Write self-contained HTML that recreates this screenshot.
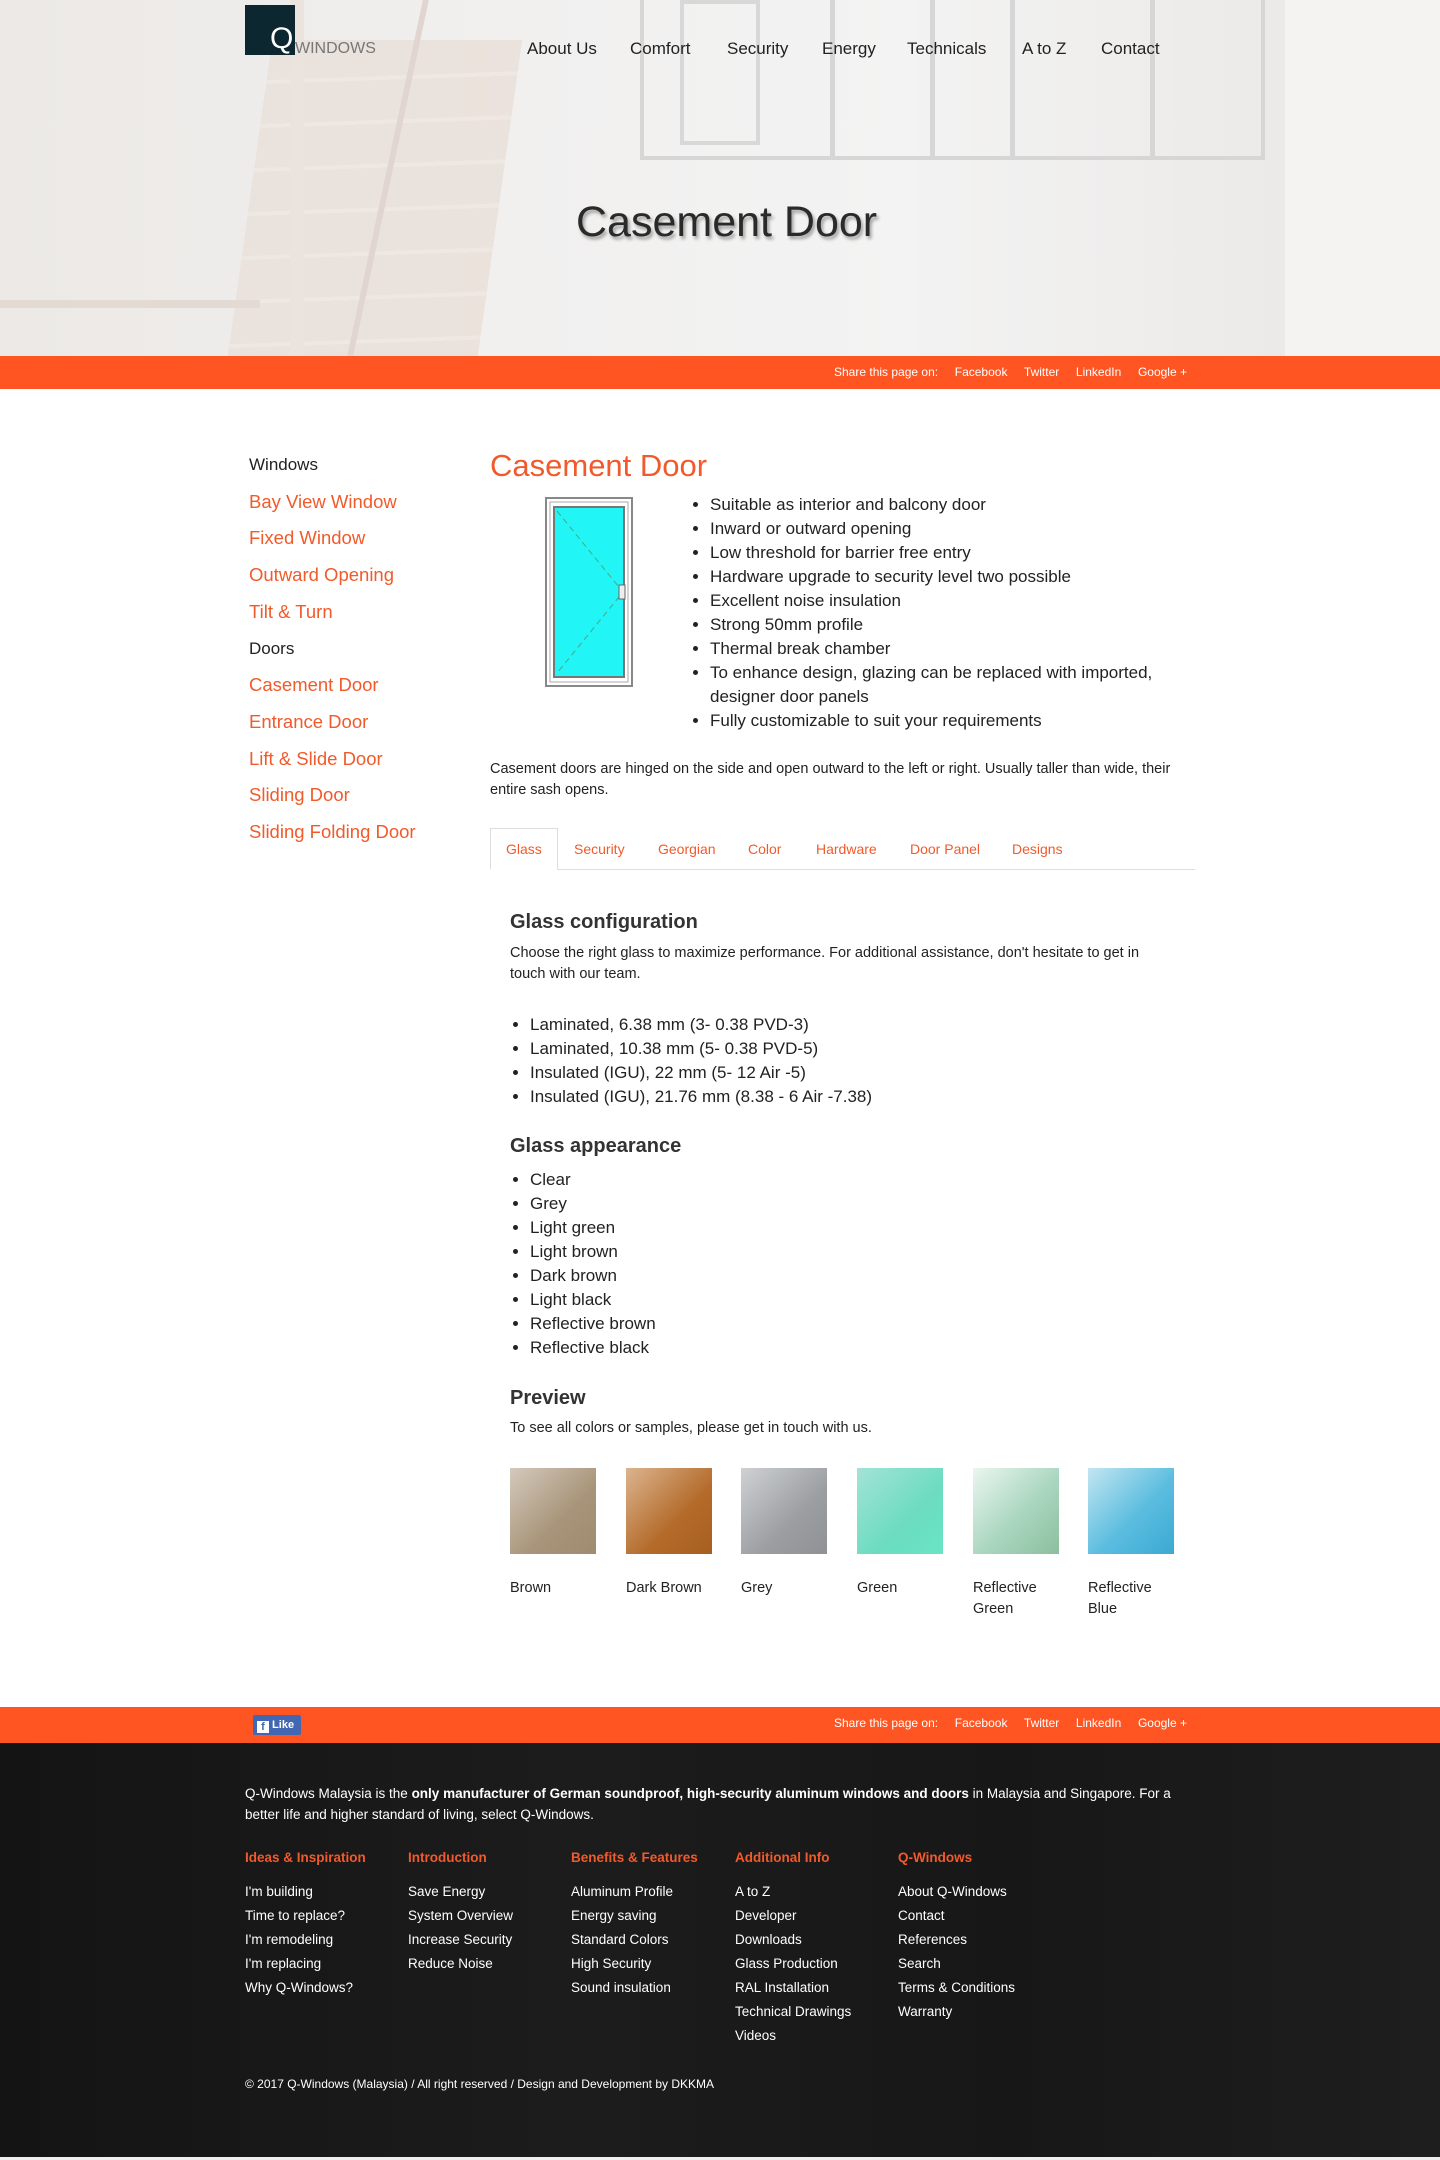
<!DOCTYPE html>
<html><head><meta charset="utf-8"><style>
*{margin:0;padding:0;box-sizing:border-box}
body{width:1440px;height:2160px;font-family:"Liberation Sans",sans-serif;color:#333;background:#fff;position:relative;overflow:hidden}
.abs{position:absolute;white-space:nowrap}
.hero{position:absolute;left:0;top:0;width:1440px;height:356px;background:#efeeed;overflow:hidden}
.or{color:#f15a2b}
ul{list-style:disc}
</style></head><body>
<div class="hero">
  <div style="position:absolute;left:0;top:0;width:1285px;height:356px;background:linear-gradient(90deg,#ece9e6,#f1f0ef 40%,#f3f3f3 70%,#eceae8)"></div>
  <div style="position:absolute;left:1285px;top:0;width:155px;height:356px;background:#f4f3f2"></div>
  <div style="position:absolute;left:250px;top:40px;width:250px;height:316px;background:repeating-linear-gradient(178deg,#e9dfd8 0 40px,#eee6e0 40px 44px);opacity:.8;transform:skewX(-8deg)"></div>
  <div style="position:absolute;left:290px;top:0;width:14px;height:356px;background:#ebe3dd"></div>
  <div style="position:absolute;left:385px;top:0;width:6px;height:356px;background:#e0d6cf;transform:skewX(-12deg)"></div>
  <div style="position:absolute;left:0;top:300px;width:260px;height:8px;background:#e3dad3"></div>
  <div style="position:absolute;left:640px;top:0;width:625px;height:160px;border:4px solid #d6d6d6;border-top:none"></div>
  <div style="position:absolute;left:680px;top:0;width:80px;height:145px;border:4px solid #d8d8d8"></div>
  <div style="position:absolute;left:830px;top:0;width:5px;height:160px;background:#d6d6d6"></div>
  <div style="position:absolute;left:930px;top:0;width:5px;height:160px;background:#d6d6d6"></div>
  <div style="position:absolute;left:1010px;top:0;width:5px;height:160px;background:#d6d6d6"></div>
  <div style="position:absolute;left:1150px;top:0;width:5px;height:160px;background:#d6d6d6"></div>
  <div style="position:absolute;left:245px;top:5px;width:50px;height:50px;background:#0d2730"></div>
  <div class="abs" style="left:270px;top:24px;font-size:30px;color:#fff;line-height:30px">Q</div>
  <div class="abs" style="left:295px;top:40px;font-size:16px;color:#777;line-height:18px">WINDOWS</div>
  <div class="abs" style="left:527px;top:39px;font-size:17px;color:#222">About Us</div>
  <div class="abs" style="left:630px;top:39px;font-size:17px;color:#222">Comfort</div>
  <div class="abs" style="left:727px;top:39px;font-size:17px;color:#222">Security</div>
  <div class="abs" style="left:822px;top:39px;font-size:17px;color:#222">Energy</div>
  <div class="abs" style="left:907px;top:39px;font-size:17px;color:#222">Technicals</div>
  <div class="abs" style="left:1022px;top:39px;font-size:17px;color:#222">A to Z</div>
  <div class="abs" style="left:1101px;top:39px;font-size:17px;color:#222">Contact</div>
  <div class="abs" style="left:576px;top:198px;font-size:43px;color:#2a2a2a;text-shadow:2px 3px 3px rgba(0,0,0,.35)">Casement Door</div>
</div>
<div style="position:absolute;left:0;top:356px;width:1440px;height:33px;background:#fe5523"></div>
<div class="abs" style="left:834px;top:365px;font-size:12px;color:#fff">Share this page on:&nbsp;&nbsp;&nbsp;&nbsp; Facebook &nbsp;&nbsp;&nbsp; Twitter &nbsp;&nbsp;&nbsp; LinkedIn &nbsp;&nbsp;&nbsp; Google +</div>

<div style="position:absolute;left:249px;top:447px;font-size:18.5px;line-height:36.7px">
<div style="color:#222;font-size:17px">Windows</div>
<div class="or">Bay View Window</div><div class="or">Fixed Window</div><div class="or">Outward Opening</div><div class="or">Tilt &amp; Turn</div>
<div style="color:#222;font-size:17px">Doors</div>
<div class="or">Casement Door</div><div class="or">Entrance Door</div><div class="or">Lift &amp; Slide Door</div><div class="or">Sliding Door</div><div class="or">Sliding Folding Door</div>
</div>

<div class="abs or" style="left:490px;top:448px;font-size:31px">Casement Door</div>
<svg style="position:absolute;left:545px;top:497px" width="88" height="190" viewBox="0 0 88 190">
<rect x="1" y="1" width="86" height="188" fill="#fff" stroke="#888" stroke-width="2"/>
<rect x="5" y="5" width="78" height="180" fill="#fff" stroke="#aaa"/>
<rect x="9" y="10" width="70" height="170" fill="#22f5f5" stroke="#777" stroke-width="2"/>
<path d="M12 14 L78 95 L12 176" fill="none" stroke="#4a8" stroke-width="1" stroke-dasharray="6 4"/>
<rect x="74" y="88" width="6" height="14" fill="#eee" stroke="#666"/>
</svg>
<ul style="position:absolute;left:710px;top:493px;width:480px;font-size:17px;line-height:24px;color:#222">
<li>Suitable as interior and balcony door</li><li>Inward or outward opening</li><li>Low threshold for barrier free entry</li><li>Hardware upgrade to security level two possible</li><li>Excellent noise insulation</li><li>Strong 50mm profile</li><li>Thermal break chamber</li><li>To enhance design, glazing can be replaced with imported, designer door panels</li><li>Fully customizable to suit your requirements</li>
</ul>
<div style="position:absolute;left:490px;top:759px;width:710px;font-size:14.5px;line-height:21px;color:#222">Casement doors are hinged on the side and open outward to the left or right. Usually taller than wide, their entire sash opens.</div>

<div style="position:absolute;left:490px;top:869px;width:705px;height:1px;background:#ddd"></div>
<div style="position:absolute;left:490px;top:828px;width:68px;height:42px;border:1px solid #ddd;border-bottom:1px solid #fff;background:#fff"></div>
<div class="abs or" style="left:506px;top:841px;font-size:14px">Glass</div>
<div class="abs or" style="left:574px;top:841px;font-size:14px">Security</div>
<div class="abs or" style="left:658px;top:841px;font-size:14px">Georgian</div>
<div class="abs or" style="left:748px;top:841px;font-size:14px">Color</div>
<div class="abs or" style="left:816px;top:841px;font-size:14px">Hardware</div>
<div class="abs or" style="left:910px;top:841px;font-size:14px">Door Panel</div>
<div class="abs or" style="left:1012px;top:841px;font-size:14px">Designs</div>

<div class="abs" style="left:510px;top:911px;font-size:20px;font-weight:bold;color:#333">Glass configuration</div>
<div style="position:absolute;left:510px;top:943px;width:668px;font-size:14.5px;line-height:21px;color:#222">Choose the right glass to maximize performance. For additional assistance, don't hesitate to get in touch with our team.</div>
<ul style="position:absolute;left:530px;top:1013px;font-size:17px;line-height:24px;color:#222">
<li>Laminated, 6.38 mm (3- 0.38 PVD-3)</li><li>Laminated, 10.38 mm (5- 0.38 PVD-5)</li><li>Insulated (IGU), 22 mm (5- 12 Air -5)</li><li>Insulated (IGU), 21.76 mm (8.38 - 6 Air -7.38)</li>
</ul>
<div class="abs" style="left:510px;top:1135px;font-size:20px;font-weight:bold;color:#333">Glass appearance</div>
<ul style="position:absolute;left:530px;top:1168px;font-size:17px;line-height:24px;color:#222">
<li>Clear</li><li>Grey</li><li>Light green</li><li>Light brown</li><li>Dark brown</li><li>Light black</li><li>Reflective brown</li><li>Reflective black</li>
</ul>
<div class="abs" style="left:510px;top:1387px;font-size:20px;font-weight:bold;color:#333">Preview</div>
<div class="abs" style="left:510px;top:1420px;font-size:14.5px;color:#222">To see all colors or samples, please get in touch with us.</div>

<div style="position:absolute;left:510px;top:1468px;width:86px;height:86px;background:linear-gradient(135deg,#d4c9bc,#a89579 60%,#9f8c70)"></div>
<div style="position:absolute;left:626px;top:1468px;width:86px;height:86px;background:linear-gradient(135deg,#dcb48f,#b46b2a 60%,#a75f20)"></div>
<div style="position:absolute;left:741px;top:1468px;width:86px;height:86px;background:linear-gradient(135deg,#cfd1d3,#9c9fa2 60%,#8f9194)"></div>
<div style="position:absolute;left:857px;top:1468px;width:86px;height:86px;background:linear-gradient(135deg,#a3e3d6,#6cdcc0 60%,#69e4c6)"></div>
<div style="position:absolute;left:973px;top:1468px;width:86px;height:86px;background:linear-gradient(135deg,#eaf6ef,#a9d6bf 55%,#8cbf9d)"></div>
<div style="position:absolute;left:1088px;top:1468px;width:86px;height:86px;background:linear-gradient(135deg,#c3e6f1,#5cbde0 55%,#3aa9d2)"></div>
<div style="position:absolute;top:1578px;font-size:14.5px;line-height:21px;color:#222">
<div class="abs" style="left:510px">Brown</div><div class="abs" style="left:626px">Dark Brown</div><div class="abs" style="left:741px">Grey</div><div class="abs" style="left:857px">Green</div><div class="abs" style="left:973px">Reflective<br>Green</div><div class="abs" style="left:1088px">Reflective<br>Blue</div>
</div>

<div style="position:absolute;left:0;top:1707px;width:1440px;height:36px;background:#fe5523"></div>
<div style="position:absolute;left:253px;top:1715px;width:48px;height:20px;background:#4267b2;border-radius:2px;color:#fff;font-size:11px;font-weight:bold;line-height:20px;padding-left:4px"><span style="display:inline-block;width:12px;height:12px;background:#fff;color:#4267b2;font-size:11px;line-height:13px;text-align:center;vertical-align:-2px">f</span> Like</div>
<div class="abs" style="left:834px;top:1716px;font-size:12px;color:#fff">Share this page on:&nbsp;&nbsp;&nbsp;&nbsp; Facebook &nbsp;&nbsp;&nbsp; Twitter &nbsp;&nbsp;&nbsp; LinkedIn &nbsp;&nbsp;&nbsp; Google +</div>

<div style="position:absolute;left:0;top:1743px;width:1440px;height:417px;background:linear-gradient(90deg,#141414,#1c1c1c 40%,#171717 70%,#1e1e1e)"></div>
<div style="position:absolute;left:0;top:2157px;width:1440px;height:3px;background:#eee"></div>
<div style="position:absolute;left:245px;top:1783px;width:950px;font-size:13.5px;line-height:21px;color:#fff">Q-Windows Malaysia is the <b>only manufacturer of German soundproof, high-security aluminum windows and doors</b> in Malaysia and Singapore. For a better life and higher standard of living, select Q-Windows.</div>
<div style="position:absolute;top:1846px;font-size:13.5px;line-height:24px;color:#fff">
<div class="abs" style="left:245px"><b class="or">Ideas &amp; Inspiration</b><div style="height:10px"></div>I'm building<br>Time to replace?<br>I'm remodeling<br>I'm replacing<br>Why Q-Windows?</div>
<div class="abs" style="left:408px"><b class="or">Introduction</b><div style="height:10px"></div>Save Energy<br>System Overview<br>Increase Security<br>Reduce Noise</div>
<div class="abs" style="left:571px"><b class="or">Benefits &amp; Features</b><div style="height:10px"></div>Aluminum Profile<br>Energy saving<br>Standard Colors<br>High Security<br>Sound insulation</div>
<div class="abs" style="left:735px"><b class="or">Additional Info</b><div style="height:10px"></div>A to Z<br>Developer<br>Downloads<br>Glass Production<br>RAL Installation<br>Technical Drawings<br>Videos</div>
<div class="abs" style="left:898px"><b class="or">Q-Windows</b><div style="height:10px"></div>About Q-Windows<br>Contact<br>References<br>Search<br>Terms &amp; Conditions<br>Warranty</div>
</div>
<div class="abs" style="left:245px;top:2077px;font-size:12px;color:#fff">© 2017 Q-Windows (Malaysia) / All right reserved / Design and Development by DKKMA</div>
</body></html>
